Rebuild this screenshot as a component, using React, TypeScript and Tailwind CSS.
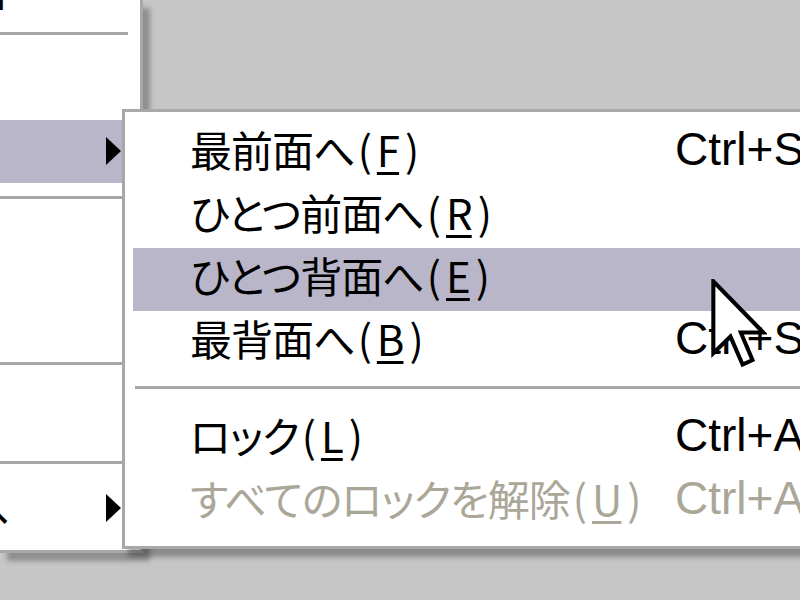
import React from 'react';

const jp: React.CSSProperties = {
  fontFamily: '"Noto Sans CJK JP", "Noto Sans", sans-serif',
  fontFeatureSettings: '"palt"',
};
const latin = { fontFamily: '"Liberation Sans", Arial, sans-serif' };

const Arrow: React.FC = () => (
  <svg width="18" height="28" viewBox="0 0 18 28" className="shrink-0">
    <path d="M2 0 L17 14 L2 28 Z" fill="#000" />
  </svg>
);

interface ItemProps {
  label: string;
  accel: string;
  shortcut?: string;
  active?: boolean;
  disabled?: boolean;
}

const SubItem: React.FC<ItemProps> = ({ label, accel, shortcut, active, disabled }) => {
  const color = disabled ? 'text-[#aaa698]' : 'text-black';
  return (
    <div className={`h-[63px] flex items-center pb-[10px] ${active ? 'bg-[#b9b6c9]' : ''} ${color}`}>
      <div className="w-[542px] shrink-0 pl-[57px] text-[42px] tracking-[-1px] leading-none whitespace-nowrap" style={jp}>
        {label}
        <span className="ml-[3px]">(</span>
        <span className="mx-[6px] underline decoration-[3px] underline-offset-[5px]">{accel}</span>
        <span>)</span>
      </div>
      <div className="shrink-0 text-[46px] leading-none whitespace-nowrap" style={latin}>
        {shortcut}
      </div>
    </div>
  );
};

const Separator: React.FC<{ className?: string }> = ({ className = '' }) => (
  <div className={`flex items-center ${className}`}>
    <div className="h-[3px] w-full bg-[#a6a6a6]" />
  </div>
);

const App: React.FC = () => {
  return (
    <div className="relative w-[800px] h-[600px] overflow-hidden bg-[#c6c6c6]">
      {/* parent menu */}
      <div className="w-[143px] h-[553px] bg-white border-r-[3px] border-b-[3px] border-[#a8a8a8] shadow-[7px_8px_5px_rgba(0,0,0,0.28)] flex flex-col">
        <div className="h-[22px] overflow-hidden">
          <div className="-mt-[32px] -ml-[34px] text-[41px] leading-none" style={jp}>面</div>
        </div>
        <Separator className="h-[22px] w-[128px]" />
        <div className="h-[76px]" />
        <div className="h-[63px] bg-[#b9b6c9] flex items-center justify-end pr-[18px] pb-[2px]">
          <Arrow />
        </div>
        <Separator className="h-[28px] w-[124px]" />
        <div className="h-[138px]" />
        <Separator className="h-[28px] w-[124px]" />
        <div className="h-[71px]" />
        <Separator className="h-[28px] w-[124px]" />
        <div className="h-[63px] flex items-center justify-between pr-[18px]">
          <div className="-ml-[32px] text-[41px] leading-none" style={jp}>へ</div>
          <Arrow />
        </div>
      </div>

      {/* submenu */}
      <div className="absolute left-[122px] top-[109px] w-[700px] h-[440px] bg-white border-[3px] border-[#a8a8a8] shadow-[6px_8px_5px_rgba(0,0,0,0.3)] pt-[10px] pl-[8px] flex flex-col">
        <SubItem label="最前面へ" accel="F" shortcut="Ctrl+Shift+F" />
        <SubItem label="ひとつ前面へ" accel="R" />
        <SubItem label="ひとつ背面へ" accel="E" active />
        <SubItem label="最背面へ" accel="B" shortcut="Ctrl+Shift+B" />
        <div className="h-[34px] pt-[12px] pl-[2px]">
          <div className="h-[3px] w-full bg-[#a6a6a6]" />
        </div>
        <SubItem label="ロック" accel="L" shortcut="Ctrl+Alt+L" />
        <SubItem label="すべてのロックを解除" accel="U" shortcut="Ctrl+Alt+U" disabled />
      </div>

      {/* mouse pointer */}
      <svg className="absolute left-[711px] top-[279px]" width="56" height="90" viewBox="0 0 12.4 20">
        <path
          d="M0.5 0.5 L0.5 16.5 L4.3 12.8 L7 19 L9.2 18 L6.6 11.9 L11.6 11.9 Z"
          fill="#fff"
          stroke="#000"
          strokeWidth="0.9"
          strokeLinejoin="miter"
        />
      </svg>
    </div>
  );
};

export default App;
